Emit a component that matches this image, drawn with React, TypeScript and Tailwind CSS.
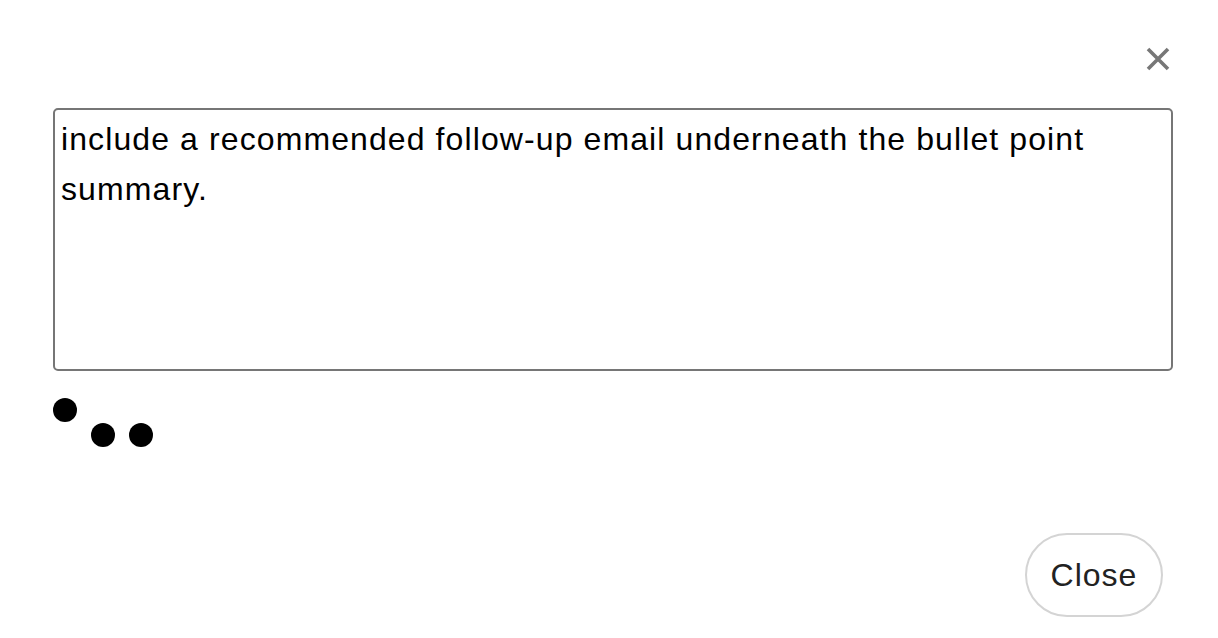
import React from "react";

function Dots() {
  return (
    <div className="flex items-start gap-[14px] h-[50px]">
      <span className="h-6 w-6 rounded-full bg-black" />
      <span className="mt-[25px] h-6 w-6 rounded-full bg-black" />
      <span className="mt-[25px] h-6 w-6 rounded-full bg-black" />
    </div>
  );
}

export default function App() {
  return (
    <div
      className="h-[638px] w-[1218px] bg-white pl-[53px] pr-[45px]"
      style={{ fontFamily: '"Liberation Sans", Arial, sans-serif' }}
    >
      {/* close icon */}
      <div className="flex justify-end pt-[46px] pr-[2px]">
        <button className="flex h-[26px] w-[26px] items-center justify-center text-[#777]">
          <svg width="24" height="24" viewBox="0 0 24 24" fill="none">
            <path d="M2 2 L22 22 M22 2 L2 22" stroke="currentColor" strokeWidth="3.6" />
          </svg>
        </button>
      </div>

      <textarea
        readOnly
        className="mt-[36px] block h-[263px] w-full resize-none rounded-[5px] border-2 border-[#767676] px-[6px] pt-[4px] text-[32px] leading-[50px] tracking-[1.1px] text-black outline-none"
        value="include a recommended follow-up email underneath the bullet point summary."
      />

      <div className="mt-[27px]">
        <Dots />
      </div>

      <div className="mt-[85px] flex justify-end pr-[10px]">
        <button className="h-[84px] w-[138px] rounded-full border-2 border-[#d4d4d4] bg-white text-[32px] tracking-[1px] text-[#222]">
          Close
        </button>
      </div>
    </div>
  );
}
